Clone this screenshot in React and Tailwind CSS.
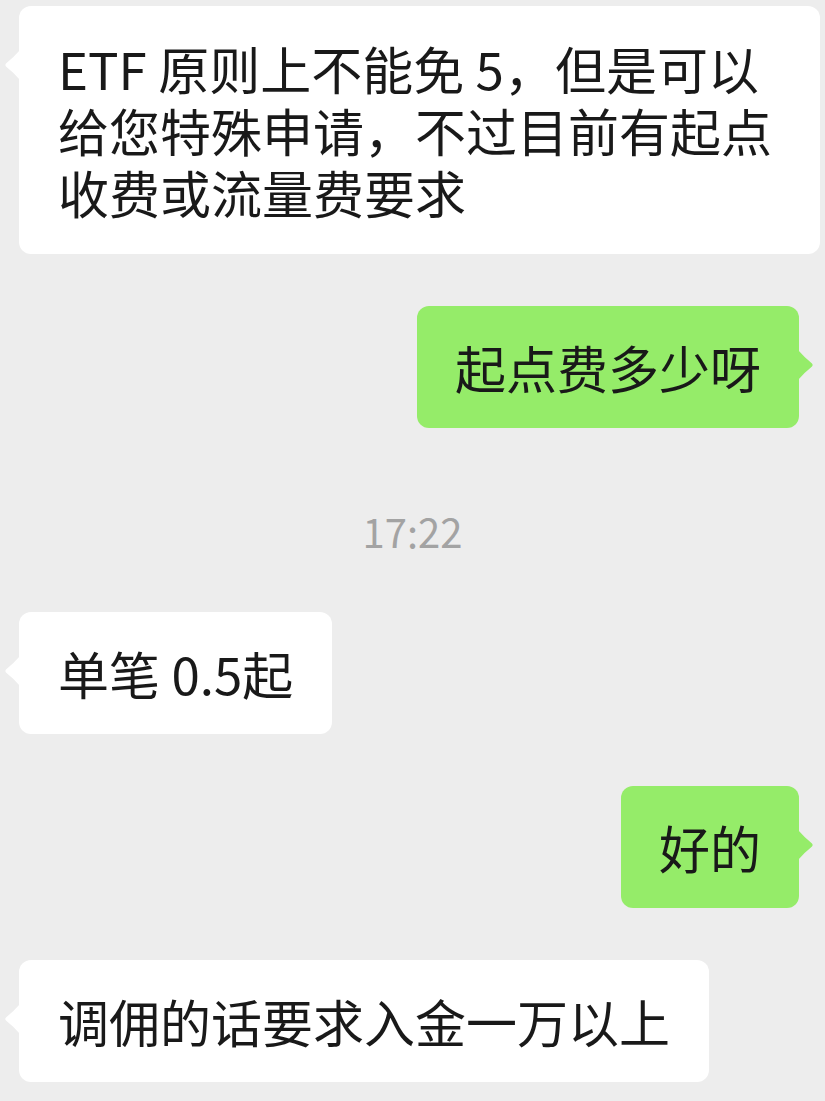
import React from "react";

const font = { fontFamily: '"Noto Sans CJK SC", "Noto Sans", sans-serif' };

function TailLeft() {
  return (
    <svg
      className="absolute left-[-15px] top-[44px]"
      width="16"
      height="30"
      viewBox="0 0 16 30"
    >
      <path d="M16 0 L16 30 Q9 22 2 16.5 Q0.5 15 2 13.5 Q9 8 16 0 Z" fill="#ffffff" />
    </svg>
  );
}

function TailRight() {
  return (
    <svg
      className="absolute right-[-15px] top-[44px]"
      width="16"
      height="30"
      viewBox="0 0 16 30"
    >
      <path d="M0 0 L0 30 Q7 22 14 16.5 Q15.5 15 14 13.5 Q7 8 0 0 Z" fill="#95ec69" />
    </svg>
  );
}

function Left({ children, className = "" }) {
  return (
    <div className={"flex justify-start pl-[19px] " + className}>
      <div className="relative rounded-[12px] bg-white px-[39px] py-[30px] text-[51px] leading-[62px] text-[#191919] whitespace-nowrap">
        <TailLeft />
        {children}
      </div>
    </div>
  );
}

function Right({ children, className = "" }) {
  return (
    <div className={"flex justify-end pr-[26px] " + className}>
      <div className="relative rounded-[12px] bg-[#95ec69] px-[38px] py-[30px] text-[51px] leading-[62px] text-[#191919] whitespace-nowrap">
        <TailRight />
        {children}
      </div>
    </div>
  );
}

export default function App() {
  return (
    <div className="w-[825px] h-[1101px] overflow-hidden bg-[#ededed] flex flex-col" style={font}>
      <div className="mt-[6px] flex justify-start pl-[19px]">
        <div className="relative w-[801px] rounded-[12px] bg-white px-[39px] py-[31px] text-[51px] leading-[62px] text-[#191919] whitespace-nowrap">
          <TailLeft />
          <div>ETF 原则上不能免 5，但是可以</div>
          <div>给您特殊申请，不过目前有起点</div>
          <div>收费或流量费要求</div>
        </div>
      </div>

      <Right className="mt-[52px]">起点费多少呀</Right>

      <div className="mt-[78px] flex justify-center h-[50px] items-center text-[40px] leading-[50px] text-[#a3a3a3]">
        17:22
      </div>

      <Left className="mt-[56px]">单笔 0.5起</Left>

      <Right className="mt-[52px]">好的</Right>

      <Left className="mt-[52px]">调佣的话要求入金一万以上</Left>
    </div>
  );
}
